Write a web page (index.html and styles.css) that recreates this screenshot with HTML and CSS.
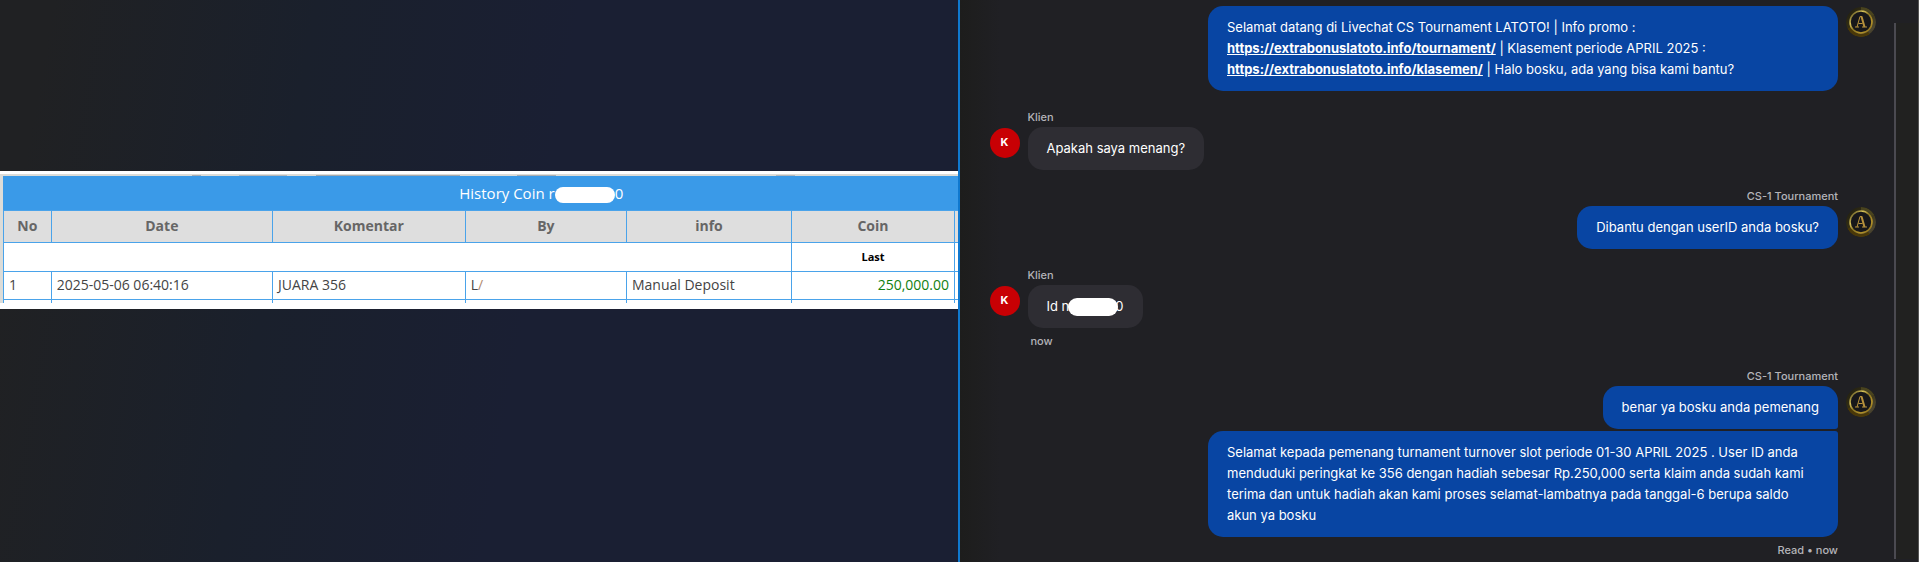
FILE: index.html
```html
<!DOCTYPE html>
<html lang="id">
<head>
    <meta charset="UTF-8">
    <meta name="viewport" content="width=device-width, initial-scale=1.0">
    <title>Livechat CS Tournament</title>
    <link rel="stylesheet" href="styles.css">
</head>
<body>
    <!-- Logo avatar CS -->
    <svg class="defs" aria-hidden="true">
        <defs>
            <linearGradient id="gold" x1="0" y1="0" x2="1" y2="1">
                <stop offset="0" stop-color="#3a3210"/>
                <stop offset="0.3" stop-color="#d8c35a"/>
                <stop offset="0.5" stop-color="#8a7422"/>
                <stop offset="0.75" stop-color="#b8962c"/>
                <stop offset="1" stop-color="#6b5414"/>
            </linearGradient>
            <linearGradient id="rim" x1="0" y1="0" x2="1" y2="1">
                <stop offset="0" stop-color="#1c1b12"/>
                <stop offset="0.5" stop-color="#3b3413"/>
                <stop offset="0.8" stop-color="#4b4530"/>
                <stop offset="1" stop-color="#26231a"/>
            </linearGradient>
            <symbol id="logo" viewBox="0 0 30 30">
                <circle cx="15" cy="15" r="15" fill="url(#rim)"/>
                <path d="M15 0a15 15 0 0 1 13 7.500l-5 3-8-5z" fill="#49431f"/>
                <path d="M3 21c4 8 14 10 20 5" fill="none" stroke="#4a3808" stroke-width="3"/>
                <circle cx="15" cy="15" r="11" fill="#17171a" stroke="url(#gold)" stroke-width="1.600"/>
                <path d="M9 20h4M16 20h5M11 20l3-10.500h2M12.500 16.500h4" fill="none" stroke="#b8923c" stroke-width="1"/>
                <path d="M15.500 9.500l3 10.500" fill="none" stroke="#b8923c" stroke-width="2"/>
            </symbol>
        </defs>
    </svg>

    <div class="container">
        <!-- Panel kiri: riwayat koin -->
        <section class="history">
            <div class="sheet">
                <table class="coin-table">
                    <caption>History Coin r<span class="mask mask-title"></span>0</caption>
                    <colgroup>
                        <col class="col-no">
                        <col class="col-date">
                        <col class="col-komentar">
                        <col class="col-by">
                        <col class="col-info">
                        <col class="col-coin">
                        <col class="col-rest">
                    </colgroup>
                    <thead>
                        <tr>
                            <th>No</th>
                            <th>Date</th>
                            <th>Komentar</th>
                            <th>By</th>
                            <th>info</th>
                            <th>Coin</th>
                            <th></th>
                        </tr>
                    </thead>
                    <tbody>
                        <tr class="last">
                            <td colspan="5"></td>
                            <td>Last</td>
                            <td></td>
                        </tr>
                        <tr>
                            <td>1</td>
                            <td>2025-05-06 06:40:16</td>
                            <td>JUARA 356</td>
                            <td>L<span class="cut">/</span></td>
                            <td>Manual Deposit</td>
                            <td class="amount">250,000.00</td>
                            <td></td>
                        </tr>
                        <tr class="stub">
                            <td></td>
                            <td></td>
                            <td></td>
                            <td></td>
                            <td></td>
                            <td></td>
                            <td></td>
                        </tr>
                    </tbody>
                </table>
            </div>
        </section>

        <!-- Panel kanan: livechat -->
        <main class="chat">
            <div class="messages">
                <div class="group agent">
                    <svg class="avatar" role="img" aria-label="CS-1"><use href="#logo"/></svg>
                    <div class="bubble">Selamat datang di Livechat CS Tournament LATOTO! | Info promo : <br><a href="#tournament">https://extrabonuslatoto.info/tournament/</a> | Klasement periode APRIL 2025 : <br><a href="#klasemen">https://extrabonuslatoto.info/klasemen/</a> | Halo bosku, ada yang bisa kami bantu?</div>
                </div>

                <div class="group client">
                    <span class="name">Klien</span>
                    <span class="avatar">K</span>
                    <div class="bubble">Apakah saya menang?</div>
                </div>

                <div class="group agent">
                    <span class="name">CS-1 Tournament</span>
                    <svg class="avatar" role="img" aria-label="CS-1"><use href="#logo"/></svg>
                    <div class="bubble">Dibantu dengan userID anda bosku?</div>
                </div>

                <div class="group client">
                    <span class="name">Klien</span>
                    <span class="avatar">K</span>
                    <div class="bubble">Id n<span class="mask mask-chat"></span>0</div>
                    <span class="status">now</span>
                </div>

                <div class="group agent">
                    <span class="name">CS-1 Tournament</span>
                    <svg class="avatar" role="img" aria-label="CS-1"><use href="#logo"/></svg>
                    <div class="bubble first">benar ya bosku anda pemenang</div>
                    <div class="bubble next">Selamat kepada pemenang turnament turnover slot periode 01-30 APRIL 2025 . User ID anda menduduki peringkat ke 356 dengan hadiah sebesar Rp.250,000 serta klaim anda sudah kami terima dan untuk hadiah akan kami proses selamat-lambatnya pada tanggal-6 berupa saldo akun ya bosku</div>
                    <span class="status">Read • now</span>
                </div>
            </div>
            <div class="scrollbar"></div>
        </main>
    </div>
</body>
</html>
```
FILE: styles.css
```css
* {
    box-sizing: border-box;
}

body, html {
    margin: 0;
    padding: 0;
    height: 100%;
    overflow: hidden;
    background: #202024;
}

.defs {
    position: absolute;
    width: 0;
    height: 0;
}

.container {
    display: grid;
    grid-template-columns: 1fr 1fr;
    height: 100%;
}

/* Panel kiri */
.history {
    min-width: 0;
    display: flex;
    flex-direction: column;
    justify-content: center;
    padding-bottom: 82px;
    border-right: 2px solid #0f78cf;
    background: linear-gradient(100deg, #202123 5%, #1a202c 30%, #1a1f33 55%);
    font-family: "Open Sans", "Noto Sans", sans-serif;
}

.sheet {
    padding: 5px 0 6px 3px;
    background: linear-gradient(#dcdcd8, #dcdcd8) 0 3px / 3px 129px no-repeat,
        linear-gradient(90deg, transparent 20%, #a9adb3 20%, #a9adb3 21%, transparent 21%, transparent 25%, #b4b7bb 25%, #b4b7bb 30%, transparent 30%, transparent 33%, #a3a8ae 33%, #a3a8ae 48%, transparent 48%, transparent 54%, #a9adb3 54%, #a9adb3 58%, transparent 58%, transparent 81%, #b4b7bb 81%, #b4b7bb 83%, transparent 83%) 0 4px / 100% 1px no-repeat,
        linear-gradient(#dcdcd8, #dcdcd8) 0 3px / 100% 2px no-repeat,
        #fff;
}

.coin-table {
    width: 100%;
    table-layout: fixed;
    border-collapse: collapse;
    font-size: 14px;
    line-height: 20px;
    color: #444;
}

.coin-table caption {
    height: 34px;
    padding-left: 122px;
    background: #3a9ae8;
    color: #fff;
    font-size: 15px;
    line-height: 34px;
}

.col-no { width: 5%; }
.col-date { width: 23.2%; }
.col-komentar { width: 20.2%; }
.col-by { width: 16.9%; }
.col-info { width: 17.3%; }
.col-rest { width: 3px; }

.coin-table th,
.coin-table td {
    padding: 0 5px;
    border: 1px solid #4aa3ea;
    text-align: left;
}

.coin-table th:last-child,
.coin-table td:last-child {
    padding: 0;
    border-right: none;
}

.coin-table th {
    height: 32px;
    background: #dedede;
    color: #666;
    text-align: center;
}

.coin-table td {
    height: 28px;
    background: #fff;
}

.coin-table .last td {
    height: 29px;
    color: #000;
    font-size: 11px;
    font-weight: bold;
    text-align: center;
}

.coin-table .amount {
    color: #118011;
    text-align: right;
}

.coin-table .stub td {
    height: 4px;
    border-bottom: none;
}

.cut {
    color: #b08a70;
}

/* Penutup userID */
.mask {
    display: inline-block;
    vertical-align: middle;
    background: #fff;
    border-radius: 9px;
}

.mask-title {
    width: 60px;
    height: 16px;
}

.mask-chat {
    width: 50px;
    height: 18px;
    margin: 0 -3px 0 -1px;
}

/* Panel kanan */
.chat {
    min-width: 0;
    display: flex;
    padding-left: 30px;
    border-right: 1px solid #555;
    background: linear-gradient(90deg, #1d1d1c, #202024 40px);
    font-family: Inter, "Liberation Sans", sans-serif;
    font-size: 13px;
    line-height: 21px;
    color: #fff;
}

.messages {
    flex: 1;
    display: flex;
    flex-direction: column;
    gap: 18px;
    padding: 6px 18px 0 0;
}

.group {
    display: grid;
    column-gap: 8px;
}

.client {
    grid-template-columns: 30px 1fr;
    justify-items: start;
}

.agent {
    grid-template-columns: 1fr 30px;
    justify-items: end;
}

.client > * {
    grid-column: 2;
}

.agent > * {
    grid-column: 1;
}

.name {
    margin-bottom: 2px;
    font-size: 11px;
    font-weight: 500;
    line-height: 16px;
    color: #b4b4b9;
}

.avatar {
    width: 30px;
    height: 30px;
    margin-top: 1px;
    border-radius: 50%;
}

.client .avatar {
    grid-column: 1;
    grid-row: 2;
    background: #c80004;
    font-size: 11px;
    font-weight: bold;
    line-height: 29px;
    text-align: center;
}

.agent .avatar {
    grid-column: 2;
    grid-row: 2;
}

.agent .avatar:first-child {
    grid-row: 1;
}

.bubble {
    max-width: 630px;
    padding: 11px 19px;
    border-radius: 15px;
}

.client .bubble {
    grid-row: 2;
    background: #2e2d33;
}

.agent .bubble {
    grid-row: 2;
    background: #0845a3;
}

.agent .avatar:first-child + .bubble {
    grid-row: 1;
    width: 630px;
    max-width: 100%;
}

.agent .first {
    border-bottom-right-radius: 3px;
}

.agent .next {
    grid-row: 3;
    margin-top: 2px;
    border-top-right-radius: 3px;
}

.bubble a {
    color: #fff;
    font-weight: bold;
}

.status {
    margin-top: 4px;
    font-size: 11px;
    font-weight: 500;
    line-height: 18px;
    color: #b4b4b9;
}

.client .status {
    padding-left: 3px;
}

.scrollbar {
    width: 24px;
    margin: 23px 0 3px;
    border-left: 2px solid #4b4a51;
    background: #212120;
}
```
